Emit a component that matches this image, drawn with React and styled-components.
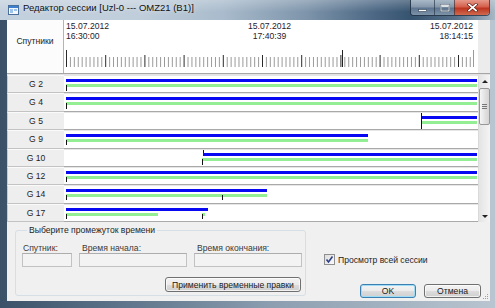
import React from 'react';
import styled, { createGlobalStyle } from 'styled-components';

const GlobalStyle = createGlobalStyle`
  html, body {
    margin: 0;
    padding: 0;
    width: 495px;
    height: 308px;
    overflow: hidden;
  }
  body {
    font-family: "Liberation Sans", Arial, sans-serif;
    font-size: 8.6px;
    color: #1e1e1e;
  }
  * {
    box-sizing: border-box;
  }
`;

const Window = styled.div`
  width: 495px;
  height: 308px;
  display: flex;
  flex-direction: column;
  background: linear-gradient(to right, #3b5167 0%, #4f667d 15%, #8c9eb0 55%, #b9c5d0 100%);
`;

const TitleBar = styled.div`
  height: 20px;
  flex: none;
  display: flex;
  align-items: flex-start;
  padding-left: 8px;
  background:
    linear-gradient(to bottom, rgba(255, 255, 255, 0.25), rgba(255, 255, 255, 0) 60%),
    linear-gradient(to right, #c3d0dd 0%, #c0cedb 28%, #a9bbcc 45%, #7d94aa 62%, #4a6683 76%, #36536f 83%, #56708a 92%, #a8b7c5 100%);
`;

const TitleIcon = styled.svg`
  margin-top: 5px;
  flex: none;
`;

const Title = styled.div`
  margin-left: 4px;
  padding-top: 2px;
  font-size: 9.5px;
  line-height: 12px;
  color: #111;
  text-shadow: 0 0 5px rgba(255, 255, 255, 0.7);
  white-space: nowrap;
  flex: 1;
`;

const Captions = styled.div`
  display: flex;
  margin-right: 5px;
  height: 16px;
  border: 1px solid rgba(30, 45, 60, 0.75);
  border-top: none;
  border-radius: 0 0 4px 4px;
  overflow: hidden;
  box-shadow: inset 0 0 0 1px rgba(255, 255, 255, 0.35);
`;

const CaptionButton = styled.div`
  width: ${(p) => p.$w}px;
  height: 100%;
  display: flex;
  align-items: center;
  justify-content: center;
  border-left: ${(p) => (p.$first ? 'none' : '1px solid rgba(30, 45, 60, 0.6)')};
  background: ${(p) =>
    p.$close
      ? 'linear-gradient(to bottom, #e6988a 0%, #d4604c 45%, #bd3520 55%, #d06a4f 100%)'
      : 'linear-gradient(to bottom, #a9b9c8 0%, #8699ac 45%, #5d7590 55%, #7d93a8 100%)'};
`;

const Frame = styled.div`
  flex: 1;
  display: flex;
  padding: 0 5px 7px 7px;
`;

const Client = styled.div`
  flex: 1;
  display: flex;
  flex-direction: column;
  background: #f0f0f0;
  position: relative;
`;

const HeaderRow = styled.div`
  display: grid;
  grid-template-columns: 57px 414px 12px;
  height: 54px;
  border-bottom: 1px solid #a6a6a6;
  box-shadow: 0 1px 0 #e2e2e2;
`;

const HeaderLabel = styled.div`
  background: #fcfcfc;
  border-right: 1px solid #b4b4b4;
  text-align: center;
  padding-top: 16px;
  line-height: 10px;
`;

const Ruler = styled.div`
  position: relative;
  background: #fff;
`;

const Dates = styled.div`
  display: flex;
  justify-content: space-between;
  padding: 2px 5px 0 2px;
  line-height: 9.6px;
  color: #2a1a2a;
`;

const DateBlock = styled.div`
  text-align: ${(p) => p.$align};
  white-space: nowrap;
`;

const RulerTicks = styled.svg`
  position: absolute;
  left: 0;
  top: 0;
`;

const Corner = styled.div`
  background: #ececec;
`;

const ListArea = styled.div`
  display: flex;
  height: 147px;
  margin-top: 1px;
`;

const Rows = styled.div`
  width: 471px;
  display: flex;
  flex-direction: column;
`;

const Row = styled.div`
  display: grid;
  grid-template-columns: 57px 414px;
  height: 18.375px;
`;

const RowLabel = styled.div`
  background: #eeeeee;
  border-left: 1px solid #c9c9c9;
  border-bottom: 1px solid #c3c3c3;
  border-top: 1px solid #fafafa;
  text-align: center;
  line-height: 16px;
  color: #222;
`;

const Track = styled.div`
  position: relative;
  background: #fff;
  border-bottom: 1px solid #a9a9a9;
  border-top: 1px solid #e6e6e6;
`;

const Bar = styled.div`
  position: absolute;
  top: ${(p) => (p.$kind === 'blue' ? 3 : 8)}px;
  height: 3px;
  background: ${(p) => (p.$kind === 'blue' ? '#0808f2' : '#94ee94')};
`;

const Tick = styled.div`
  position: absolute;
  width: 1px;
  background: #111;
`;

const ScrollBar = styled.div`
  width: 12px;
  display: flex;
  flex-direction: column;
  background: linear-gradient(to right, #e4e4e4, #f4f4f4);
  border-left: 1px solid #dadada;
`;

const ArrowButton = styled.div`
  height: 12px;
  display: flex;
  align-items: center;
  justify-content: center;
`;

const Arrow = styled.div`
  width: 0;
  height: 0;
  border-left: 3px solid transparent;
  border-right: 3px solid transparent;
  ${(p) => (p.$down ? 'border-top: 3px solid #222;' : 'border-bottom: 3px solid #222;')}
`;

const ScrollTrack = styled.div`
  flex: 1;
`;

const Thumb = styled.div`
  margin: 1px 0 0 0;
  height: 37px;
  border: 1px solid #979797;
  border-radius: 2px;
  background: linear-gradient(to right, #f6f6f6, #e3e3e3 50%, #d4d4d4);
  display: flex;
  flex-direction: column;
  align-items: center;
  justify-content: center;
  gap: 1px;
`;

const Grip = styled.div`
  width: 5px;
  height: 1px;
  background: #777;
`;

const BottomPanel = styled.div`
  flex: 1;
  display: flex;
  padding: 3px 9px 0 8px;
  gap: 18px;
`;

const GroupBox = styled.fieldset`
  margin: 0;
  width: 291px;
  height: 71px;
  padding: 0 3px 3px 6px;
  border: 1px solid #d5dfe5;
  border-radius: 3px;
  display: flex;
  flex-direction: column;
  min-width: 0;
`;

const Legend = styled.legend`
  margin-left: 5px;
  padding: 0 2px;
  line-height: 10px;
  color: #1e1e1e;
`;

const FieldRow = styled.div`
  display: flex;
  gap: 7px;
  margin-top: 8px;
`;

const Field = styled.div`
  display: flex;
  flex-direction: column;
  width: ${(p) => p.$w}px;
`;

const FieldLabel = styled.div`
  line-height: 10px;
  padding-left: ${(p) => p.$pad}px;
  color: #3a3a3a;
  white-space: nowrap;
`;

const Input = styled.div`
  height: 14px;
  border: 1px solid #c2c2c2;
  border-top-color: #adadad;
  background: #f3f3f3;
`;

const Button = styled.div`
  height: ${(p) => p.$h}px;
  width: ${(p) => p.$w}px;
  display: flex;
  align-items: center;
  justify-content: center;
  border: 1px solid ${(p) => (p.$default ? '#3c7fb1' : '#707070')};
  border-radius: 3px;
  background: linear-gradient(to bottom, #f3f3f3 0%, #ebebeb 50%, #dddddd 51%, #cfcfcf 100%);
  box-shadow: inset 0 0 0 1px ${(p) => (p.$default ? '#9fdcf6' : 'rgba(255,255,255,0.7)')};
  color: #1a1a1a;
  white-space: nowrap;
`;

const ApplyButton = styled(Button)`
  margin-top: 10px;
  align-self: flex-end;
  margin-right: 1px;
`;

const RightSide = styled.div`
  flex: 1;
  display: flex;
  flex-direction: column;
`;

const CheckRow = styled.label`
  display: flex;
  align-items: center;
  gap: 3px;
  margin-top: 29px;
  color: #1e1e1e;
`;

const CheckBox = styled.span`
  width: 11px;
  height: 11px;
  border: 1px solid #8f8f8f;
  background: linear-gradient(135deg, #dcdcdc, #fbfbfb);
  display: flex;
  align-items: center;
  justify-content: center;
`;

const ButtonRow = styled.div`
  display: flex;
  justify-content: flex-end;
  gap: 8px;
  margin-top: 19px;
`;

const SizeGrip = styled.svg`
  position: absolute;
  right: 1px;
  bottom: 1px;
`;

const rows = [
  { name: 'G 2', blue: [[2, 413]], green: [[2, 413]], ticks: [[2, 9, 6]] },
  { name: 'G 4', blue: [[2, 413]], green: [[2, 413]], ticks: [[2, 9, 6]] },
  { name: 'G 5', blue: [[357, 413]], green: [[357, 413]], ticks: [[357, 0, 16]] },
  { name: 'G 9', blue: [[2, 304]], green: [[2, 304]], ticks: [[2, 9, 5]] },
  { name: 'G 10', blue: [[139, 413]], green: [[138, 413]], ticks: [[139, 0, 3], [138, 9, 6]] },
  { name: 'G 12', blue: [[2, 413]], green: [[2, 413]], ticks: [[2, 9, 5]] },
  { name: 'G 14', blue: [[2, 203]], green: [[2, 203]], ticks: [[2, 9, 5], [158, 9, 5]] },
  { name: 'G 17', blue: [[2, 144]], green: [[2, 94], [138, 141]], ticks: [[2, 9, 5], [138, 9, 5]] },
];

function RulerDrawing() {
  const lines = [];
  for (let i = 0; i <= 104; i++) {
    const x = 2.5 + i * 3.92;
    if (x > 410) break;
    const major = i % 10 === 0;
    lines.push(
      <line
        key={i}
        x1={x}
        x2={x}
        y1={major ? (i === 0 ? 30 : 35) : 37}
        y2={47}
        stroke={major ? '#2a2a2a' : '#9a9a9a'}
        strokeWidth="1"
      />
    );
  }
  lines.push(<line key="now" x1={278.5} x2={278.5} y1={30} y2={47} stroke="#222" />);
  lines.push(<line key="end" x1={409.5} x2={409.5} y1={30} y2={47} stroke="#9a9a9a" />);
  return (
    <RulerTicks width="414" height="54">
      {lines}
    </RulerTicks>
  );
}

export default function App() {
  return (
    <>
      <GlobalStyle />
      <Window>
        <TitleBar>
          <TitleIcon width="11" height="10" viewBox="0 0 11 10">
            <rect x="0.5" y="0.5" width="10" height="9" fill="#f4f8fc" stroke="#4a6f9c" />
            <rect x="1" y="1" width="9" height="2" fill="#3f7fd0" />
            <rect x="2" y="4" width="3" height="4" fill="#9cc3ec" />
            <rect x="6" y="4" width="3" height="2" fill="#9cc3ec" />
          </TitleIcon>
          <Title>Редактор сессии [Uzl-0 --- OMZ21 (B1)]</Title>
          <Captions>
            <CaptionButton $w={23} $first>
              <svg width="9" height="8" viewBox="0 0 9 8">
                <rect x="0.5" y="5.5" width="8" height="2" fill="#fff" stroke="#2c3e50" strokeWidth="0.6" />
              </svg>
            </CaptionButton>
            <CaptionButton $w={20}>
              <svg width="10" height="8" viewBox="0 0 10 8">
                <rect x="1" y="1" width="8" height="6" fill="none" stroke="#2c3e50" strokeWidth="1.6" />
                <rect x="1" y="1" width="8" height="6" fill="none" stroke="#fff" strokeWidth="0.9" />
                <rect x="1.5" y="1.3" width="7" height="1.4" fill="#fff" />
              </svg>
            </CaptionButton>
            <CaptionButton $w={35} $close>
              <svg width="11" height="9" viewBox="0 0 11 9">
                <path d="M2 1.5 L9 7.5 M9 1.5 L2 7.5" stroke="#5a1a10" strokeWidth="3" strokeLinecap="square" />
                <path d="M2 1.5 L9 7.5 M9 1.5 L2 7.5" stroke="#fff" strokeWidth="1.7" strokeLinecap="square" />
              </svg>
            </CaptionButton>
          </Captions>
        </TitleBar>
        <Frame>
          <Client>
            <HeaderRow>
              <HeaderLabel>Спутники</HeaderLabel>
              <Ruler>
                <Dates>
                  <DateBlock $align="left">
                    15.07.2012
                    <br />
                    16:30:00
                  </DateBlock>
                  <DateBlock $align="center">
                    15.07.2012
                    <br />
                    17:40:39
                  </DateBlock>
                  <DateBlock $align="right">
                    15.07.2012
                    <br />
                    18:14:15
                  </DateBlock>
                </Dates>
                <RulerDrawing />
              </Ruler>
              <Corner />
            </HeaderRow>
            <ListArea>
              <Rows>
                {rows.map((row) => (
                  <Row key={row.name}>
                    <RowLabel>{row.name}</RowLabel>
                    <Track>
                      {row.blue.map(([a, b], i) => (
                        <Bar key={`b${i}`} $kind="blue" style={{ left: a, width: b - a }} />
                      ))}
                      {row.green.map(([a, b], i) => (
                        <Bar key={`g${i}`} $kind="green" style={{ left: a, width: b - a }} />
                      ))}
                      {row.ticks.map(([x, top, h], i) => (
                        <Tick key={`t${i}`} style={{ left: x, top, height: h }} />
                      ))}
                    </Track>
                  </Row>
                ))}
              </Rows>
              <ScrollBar>
                <ArrowButton>
                  <Arrow />
                </ArrowButton>
                <ScrollTrack>
                  <Thumb>
                    <Grip />
                    <Grip />
                    <Grip />
                  </Thumb>
                </ScrollTrack>
                <ArrowButton>
                  <Arrow $down />
                </ArrowButton>
              </ScrollBar>
            </ListArea>
            <BottomPanel>
              <GroupBox>
                <Legend>Выберите промежуток времени</Legend>
                <FieldRow>
                  <Field $w={50}>
                    <FieldLabel $pad={1}>Спутник:</FieldLabel>
                    <Input />
                  </Field>
                  <Field $w={108}>
                    <FieldLabel $pad={3}>Время начала:</FieldLabel>
                    <Input />
                  </Field>
                  <Field $w={108}>
                    <FieldLabel $pad={3}>Время окончания:</FieldLabel>
                    <Input />
                  </Field>
                </FieldRow>
                <ApplyButton $w={136} $h={15}>
                  Применить временные правки
                </ApplyButton>
              </GroupBox>
              <RightSide>
                <CheckRow>
                  <CheckBox>
                    <svg width="9" height="9" viewBox="0 0 9 9">
                      <path d="M1.5 4.5 L3.5 7 L7.5 1.5" fill="none" stroke="#2b3f8c" strokeWidth="1.6" />
                    </svg>
                  </CheckBox>
                  Просмотр всей сессии
                </CheckRow>
                <ButtonRow>
                  <Button $w={56} $h={14} $default>
                    OK
                  </Button>
                  <Button $w={57} $h={14}>
                    Отмена
                  </Button>
                </ButtonRow>
              </RightSide>
            </BottomPanel>
            <SizeGrip width="6" height="6" viewBox="0 0 6 6">
              <rect x="4" y="0" width="1" height="1" fill="#a0a0a0" />
              <rect x="2" y="2" width="1" height="1" fill="#a0a0a0" />
              <rect x="4" y="2" width="1" height="1" fill="#a0a0a0" />
              <rect x="0" y="4" width="1" height="1" fill="#a0a0a0" />
              <rect x="2" y="4" width="1" height="1" fill="#a0a0a0" />
              <rect x="4" y="4" width="1" height="1" fill="#a0a0a0" />
            </SizeGrip>
          </Client>
        </Frame>
      </Window>
    </>
  );
}
